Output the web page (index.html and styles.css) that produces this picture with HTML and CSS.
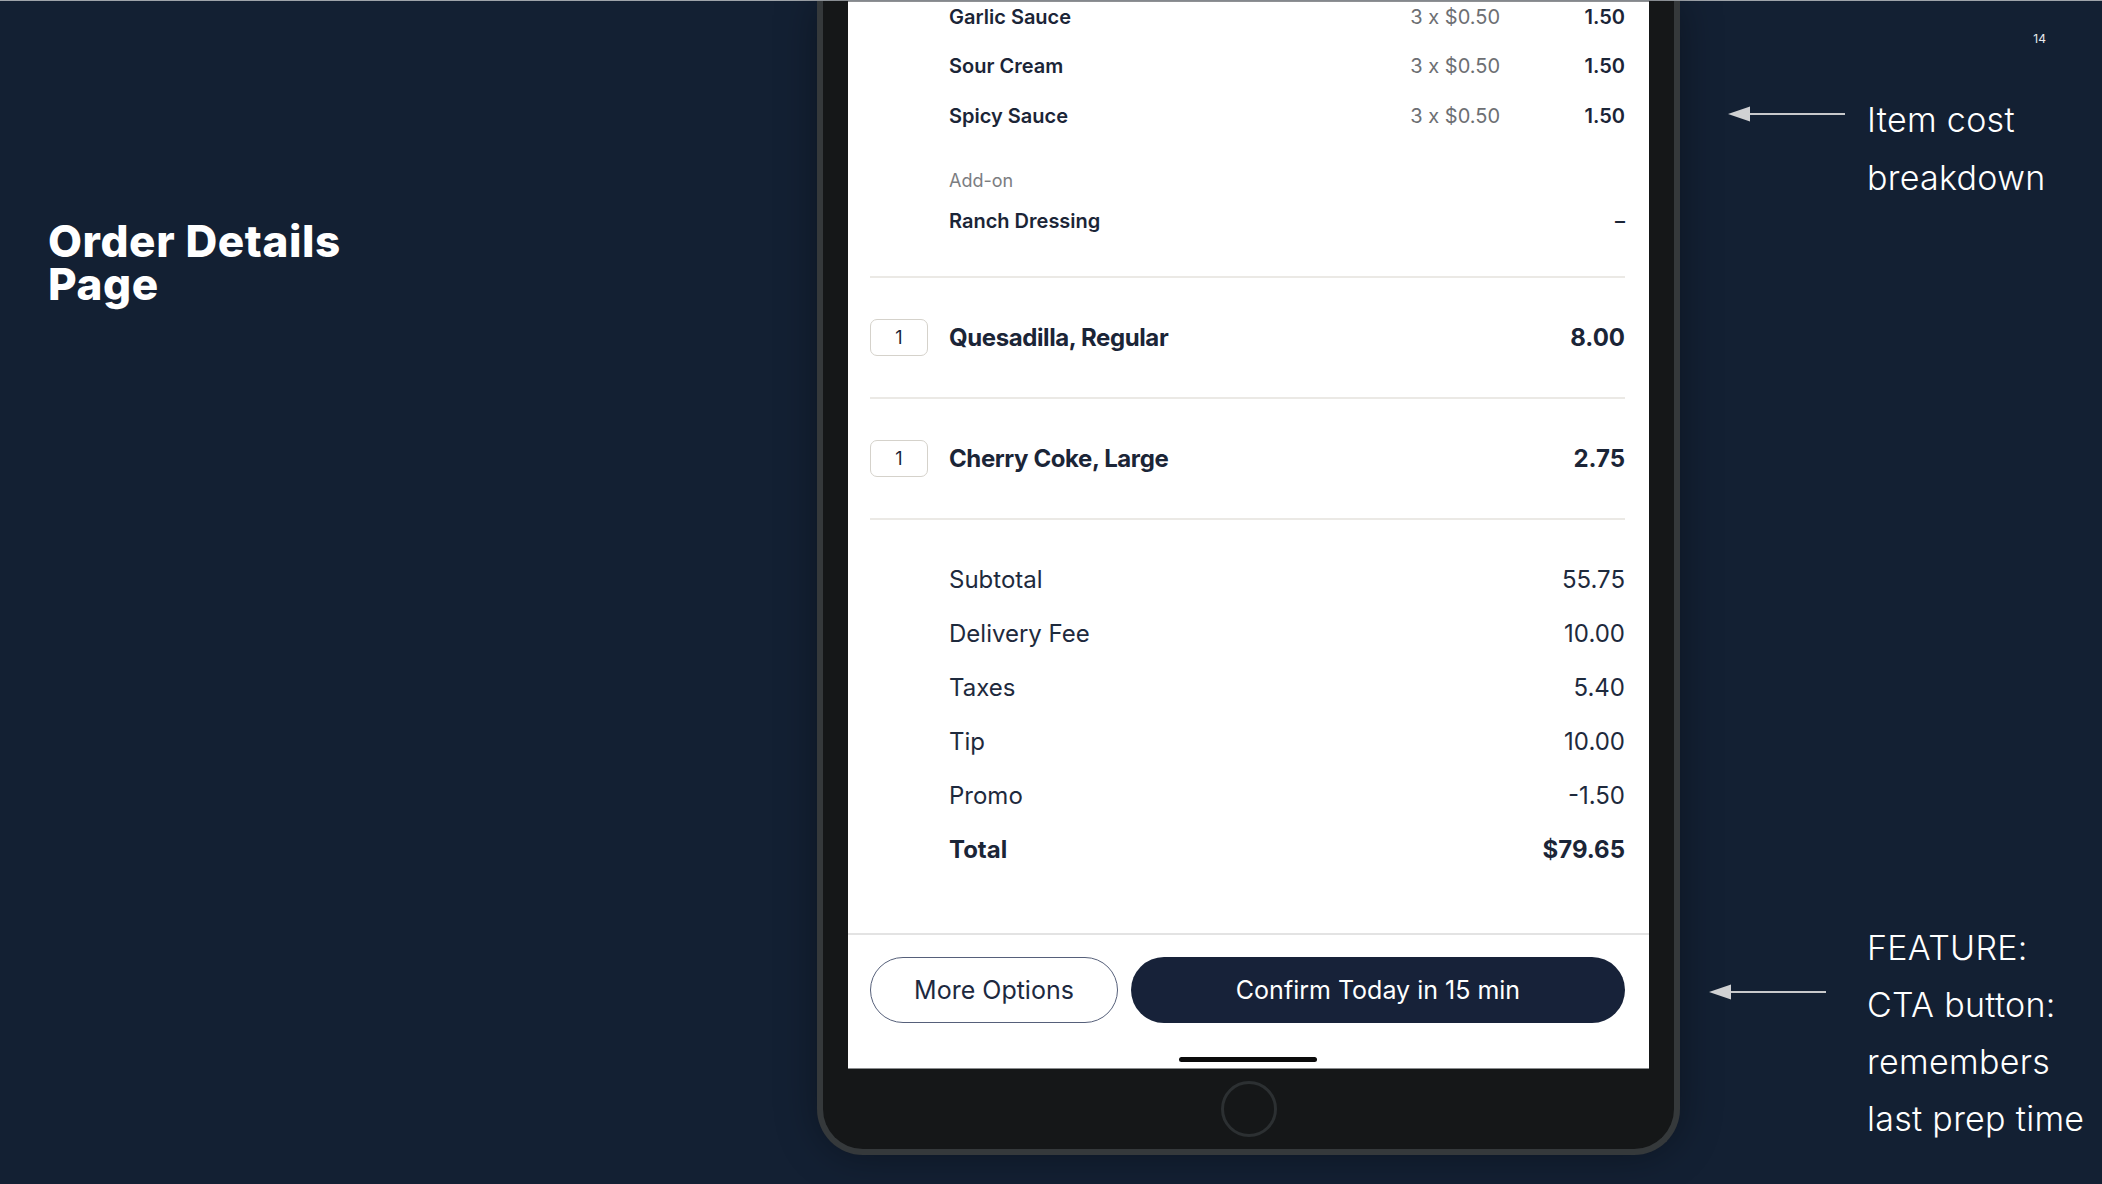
FILE: index.html
```html
<!DOCTYPE html>
<html lang="en">
<head>
<meta charset="utf-8">
<title>Order Details Page</title>
<link rel="stylesheet" href="styles.css">
</head>
<body>
<div class="slide">
  <section class="intro">
    <h1 class="title"><span class="title-line">Order Details</span><span class="title-line">Page</span></h1>
  </section>

  <div class="phone">
    <div class="screen">
      <div class="scroll">
        <div class="addons">
          <div class="sub-row"><span class="sub-name">Garlic Sauce</span><span class="sub-unit">3 x $0.50</span><span class="sub-price">1.50</span></div>
          <div class="sub-row"><span class="sub-name">Sour Cream</span><span class="sub-unit">3 x $0.50</span><span class="sub-price">1.50</span></div>
          <div class="sub-row"><span class="sub-name">Spicy Sauce</span><span class="sub-unit">3 x $0.50</span><span class="sub-price">1.50</span></div>
          <div class="sub-label">Add-on</div>
          <div class="sub-row sub-row-last"><span class="sub-name">Ranch Dressing</span><span class="sub-unit"></span><span class="sub-price">–</span></div>
        </div>

        <div class="item">
          <span class="qty">1</span>
          <span class="item-name">Quesadilla, Regular</span>
          <span class="item-price">8.00</span>
        </div>
        <div class="item item-last">
          <span class="qty">1</span>
          <span class="item-name">Cherry Coke, Large</span>
          <span class="item-price">2.75</span>
        </div>

        <div class="summary">
          <div class="sum-row"><span>Subtotal</span><span>55.75</span></div>
          <div class="sum-row"><span>Delivery Fee</span><span>10.00</span></div>
          <div class="sum-row"><span>Taxes</span><span>5.40</span></div>
          <div class="sum-row"><span>Tip</span><span>10.00</span></div>
          <div class="sum-row"><span>Promo</span><span>-1.50</span></div>
          <div class="sum-row sum-total"><span>Total</span><span>$79.65</span></div>
        </div>
      </div>

      <div class="footer">
        <div class="actions">
          <button class="btn btn-outline">More Options</button>
          <button class="btn btn-primary">Confirm Today in 15 min</button>
        </div>
        <div class="home-indicator"></div>
      </div>
    </div>
    <div class="chin">
      <div class="home-button"></div>
    </div>
  </div>

  <aside class="notes">
    <div class="slide-num">14</div>
    <div class="note note-one">
      <svg class="arrow" width="117" height="16" viewBox="0 0 117 16"><line x1="20" y1="8" x2="117" y2="8" stroke="#c8c9cb" stroke-width="2"/><polygon points="0,8 22,0.5 22,15.5" fill="#d0d1d3"/></svg>
      <p class="note-text">Item cost<br>breakdown</p>
    </div>
    <div class="note note-two">
      <svg class="arrow" width="117" height="16" viewBox="0 0 117 16"><line x1="20" y1="8" x2="117" y2="8" stroke="#c8c9cb" stroke-width="2"/><polygon points="0,8 22,0.5 22,15.5" fill="#d0d1d3"/></svg>
      <p class="note-text">FEATURE:<br>CTA button:<br>remembers<br>last prep time</p>
    </div>
  </aside>
</div>
</body>
</html>
```

FILE: styles.css
```css
* { box-sizing: border-box; }

html, body {
  margin: 0;
  padding: 0;
  background: #132033;
}

body {
  width: 2102px;
  height: 1184px;
  overflow: hidden;
  font-family: "Inter", "Liberation Sans", sans-serif;
}

.slide {
  width: 2102px;
  height: 1184px;
  border-top: 1px solid #9fa4aa;
  background: #132033;
  display: grid;
  grid-template-columns: 817px 863px 1fr;
  align-items: start;
}

/* ---------- left title ---------- */
.intro {
  padding: 222px 0 0 48px;
}

.title {
  margin: 0;
  display: flex;
  flex-direction: column;
  font-family: "Inter", "Liberation Sans", sans-serif;
  font-weight: 800;
  font-size: 44px;
  line-height: 36px;
  letter-spacing: 0.6px;
  color: #ffffff;
}

.title-line {
  display: block;
  height: 36px;
}

.title-line + .title-line {
  margin-top: 7px;
}

/* ---------- phone ---------- */
.phone {
  width: 863px;
  height: 1154px;
  background: #151718;
  border: 6px solid #35393b;
  border-top: none;
  border-radius: 0 0 46px 46px;
  padding: 0 25px;
  display: flex;
  flex-direction: column;
  box-shadow: 0 0 40px rgba(0, 0, 0, 0.35);
}

.screen {
  height: 1068px;
  background: #ffffff;
  border-top: 1px solid #8f9194;
  border-bottom: 1px solid #8a8c8e;
  display: flex;
  flex-direction: column;
  color: #1b2537;
}

.scroll {
  flex: 1;
  min-height: 0;
  overflow: hidden;
  padding: 0 24px 0 22px;
}

.addons {
  margin-top: -10px;
  padding-bottom: 30px;
}

.sub-row {
  height: 49.5px;
  display: grid;
  grid-template-columns: 1fr auto 125px;
  align-items: center;
  padding-left: 79px;
  font-size: 20px;
}

.sub-row-last {
  height: 50px;
  margin-top: 3px;
}

.sub-name {
  font-weight: 600;
  color: #1b2537;
}

.sub-unit {
  color: #6d6f73;
  font-weight: 400;
  text-align: right;
}

.sub-price {
  font-weight: 600;
  text-align: right;
  color: #1b2537;
}

.sub-label {
  margin-top: 28px;
  padding-left: 79px;
  height: 24px;
  line-height: 24px;
  font-size: 18px;
  color: #7b7d81;
}

.item {
  height: 121px;
  border-top: 2px solid #ebe9e5;
  display: flex;
  align-items: center;
}

.item-last {
  height: 123px;
  border-bottom: 2px solid #ebe9e5;
}

.qty {
  width: 58px;
  height: 37px;
  border: 1.5px solid #d5d2cb;
  border-radius: 7px;
  display: flex;
  align-items: center;
  justify-content: center;
  font-size: 18px;
  color: #1b2537;
  margin-right: 21px;
}

.item-name {
  flex: 1;
  font-size: 24px;
  font-weight: 700;
  letter-spacing: -0.4px;
}

.item-price {
  font-size: 24px;
  font-weight: 700;
}

.summary {
  padding: 33px 0 0 79px;
}

.sum-row {
  height: 54px;
  display: flex;
  align-items: center;
  justify-content: space-between;
  font-size: 24px;
  color: #1e2a3d;
}

.sum-total {
  font-weight: 700;
  color: #1b2537;
}

/* ---------- footer ---------- */
.footer {
  flex: none;
  border-top: 2px solid #e3e3e3;
  padding: 22px 24px 0 22px;
}

.actions {
  display: flex;
  gap: 13px;
}

.btn {
  height: 66px;
  border-radius: 33px;
  font-family: "Inter", "Liberation Sans", sans-serif;
  font-size: 25px;
  font-weight: 400;
  cursor: pointer;
}

.btn-outline {
  width: 248px;
  background: #ffffff;
  border: 1.5px solid #56607a;
  color: #1d2940;
}

.btn-primary {
  flex: 1;
  background: #172239;
  border: none;
  color: #ffffff;
}

.home-indicator {
  width: 138px;
  height: 5px;
  margin: 34px auto 6px;
  background: #0b0b0b;
  border-radius: 3px;
}

.chin {
  flex: 1;
  display: flex;
  align-items: center;
  justify-content: center;
}

.home-button {
  width: 56px;
  height: 56px;
  border-radius: 50%;
  border: 3px solid #2c3032;
}

/* ---------- right notes ---------- */
.notes {
  display: flex;
  flex-direction: column;
  color: #ffffff;
}

.slide-num {
  margin-top: 31px;
  padding-right: 56px;
  text-align: right;
  font-size: 12px;
  line-height: 14px;
  color: #e8eaee;
}

.note {
  display: flex;
  align-items: flex-start;
}

.note-one {
  margin-top: 45px;
}

.note-one .arrow {
  margin: 15px 22px 0 48px;
}

.note-two {
  margin-top: 712px;
}

.note-two .arrow {
  margin: 65px 41px 0 29px;
}

.arrow {
  flex: none;
  display: block;
}

.note-text {
  margin: 0;
  font-family: "Inter", "Liberation Sans", sans-serif;
  font-weight: 300;
  font-size: 34px;
  line-height: 58px;
  letter-spacing: 0.3px;
  color: #ffffff;
  white-space: nowrap;
}

.note-two .note-text {
  line-height: 57px;
}
```
